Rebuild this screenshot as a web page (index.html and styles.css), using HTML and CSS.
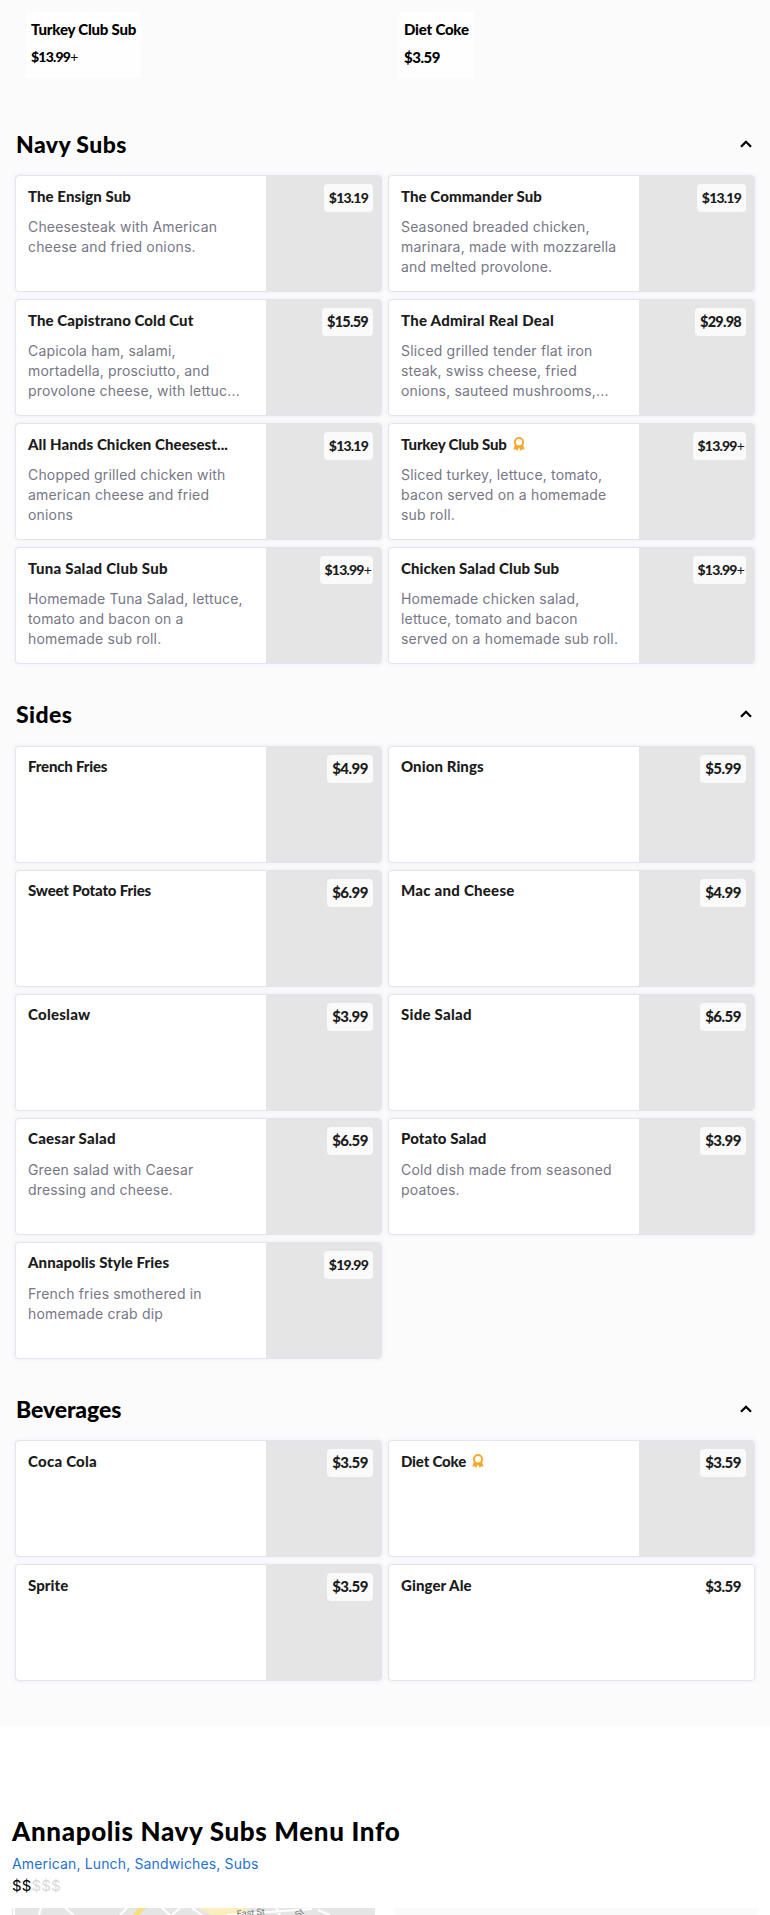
FILE: index.html
```html
<!DOCTYPE html>
<html lang="en">
<head>
  <meta charset="UTF-8" />
  <meta name="viewport" content="width=device-width, initial-scale=1.0" />
  <title>Annapolis Navy Subs Menu</title>
  <link rel="stylesheet" href="styles.css">
</head>
<body>
  <svg class="sprite" aria-hidden="true">
    <symbol id="chevron" viewBox="0 0 12 8"><path d="M1 6.8 L6 1.8 L11 6.8" fill="none" stroke="#000" stroke-width="2.3"/></symbol>
    <symbol id="award" viewBox="0 0 12 14"><path d="M2.2 7 L0.3 12.7 L2.7 12.3 L4.1 13.9 L6 10.4 L7.9 13.9 L9.3 12.3 L11.7 12.7 L9.8 7 Z" fill="#f8a92c"/><circle cx="6" cy="5.2" r="4.1" fill="#fff" stroke="#f8a92c" stroke-width="2"/></symbol>
  </svg>
  <main class="menu">
    <div class="popular">
      <div class="popular-col"><div class="popular-item"><span>Turkey Club Sub</span><span class="popular-price narrow">$13.99<i>+</i></span></div></div>
      <div class="popular-col"><div class="popular-item"><span>Diet Coke</span><span class="popular-price">$3.59</span></div></div>
    </div>

    <section>
      <header class="section-head"><h2 class="wide">Navy Subs</h2><svg class="chevron"><use href="#chevron"/></svg></header>
      <div class="grid">
        <article class="card">
          <div class="info"><h3>The Ensign Sub</h3><p>Cheesesteak with American<br>cheese and fried onions.</p></div>
          <div class="photo"><span class="price narrow">$13.19</span></div>
        </article>
        <article class="card">
          <div class="info"><h3>The Commander Sub</h3><p>Seasoned breaded chicken,<br>marinara, made with mozzarella<br>and melted provolone.</p></div>
          <div class="photo"><span class="price narrow">$13.19</span></div>
        </article>
        <article class="card">
          <div class="info"><h3>The Capistrano Cold Cut</h3><p>Capicola ham, salami,<br>mortadella, prosciutto, and<br>provolone cheese, with lettuc...</p></div>
          <div class="photo"><span class="price medium">$15.59</span></div>
        </article>
        <article class="card">
          <div class="info"><h3 class="wide">The Admiral Real Deal</h3><p>Sliced grilled tender flat iron<br>steak, swiss cheese, fried<br>onions, sauteed mushrooms,...</p></div>
          <div class="photo"><span class="price medium">$29.98</span></div>
        </article>
        <article class="card">
          <div class="info"><h3>All Hands Chicken Cheesest...</h3><p>Chopped grilled chicken with<br>american cheese and fried<br>onions</p></div>
          <div class="photo"><span class="price narrow">$13.19</span></div>
        </article>
        <article class="card">
          <div class="info"><h3 class="tight">Turkey Club Sub<svg class="award"><use href="#award"/></svg></h3><p>Sliced turkey, lettuce, tomato,<br>bacon served on a homemade<br>sub roll.</p></div>
          <div class="photo"><span class="price narrow plus">$13.99<i>+</i></span></div>
        </article>
        <article class="card">
          <div class="info"><h3 class="wide">Tuna Salad Club Sub</h3><p>Homemade Tuna Salad, lettuce,<br>tomato and bacon on a<br>homemade sub roll.</p></div>
          <div class="photo"><span class="price narrow plus">$13.99<i>+</i></span></div>
        </article>
        <article class="card">
          <div class="info"><h3>Chicken Salad Club Sub</h3><p>Homemade chicken salad,<br>lettuce, tomato and bacon<br>served on a homemade sub roll.</p></div>
          <div class="photo"><span class="price narrow plus">$13.99<i>+</i></span></div>
        </article>
      </div>
    </section>

    <section>
      <header class="section-head"><h2 class="wide">Sides</h2><svg class="chevron"><use href="#chevron"/></svg></header>
      <div class="grid">
        <article class="card"><div class="info"><h3 class="tight">French Fries</h3></div><div class="photo"><span class="price">$4.99</span></div></article>
        <article class="card"><div class="info"><h3>Onion Rings</h3></div><div class="photo"><span class="price">$5.99</span></div></article>
        <article class="card"><div class="info"><h3 class="tight">Sweet Potato Fries</h3></div><div class="photo"><span class="price">$6.99</span></div></article>
        <article class="card"><div class="info"><h3 class="wide">Mac and Cheese</h3></div><div class="photo"><span class="price">$4.99</span></div></article>
        <article class="card"><div class="info"><h3 class="wide">Coleslaw</h3></div><div class="photo"><span class="price">$3.99</span></div></article>
        <article class="card"><div class="info"><h3 class="wide">Side Salad</h3></div><div class="photo"><span class="price">$6.59</span></div></article>
        <article class="card">
          <div class="info"><h3 class="wide">Caesar Salad</h3><p>Green salad with Caesar<br>dressing and cheese.</p></div>
          <div class="photo"><span class="price">$6.59</span></div>
        </article>
        <article class="card">
          <div class="info"><h3>Potato Salad</h3><p>Cold dish made from seasoned<br>poatoes.</p></div>
          <div class="photo"><span class="price">$3.99</span></div>
        </article>
        <article class="card">
          <div class="info"><h3>Annapolis Style Fries</h3><p>French fries smothered in<br>homemade crab dip</p></div>
          <div class="photo"><span class="price narrow">$19.99</span></div>
        </article>
      </div>
    </section>

    <section>
      <header class="section-head"><h2>Beverages</h2><svg class="chevron"><use href="#chevron"/></svg></header>
      <div class="grid">
        <article class="card"><div class="info"><h3 class="wide">Coca Cola</h3></div><div class="photo"><span class="price">$3.59</span></div></article>
        <article class="card"><div class="info"><h3 class="tight">Diet Coke<svg class="award"><use href="#award"/></svg></h3></div><div class="photo"><span class="price">$3.59</span></div></article>
        <article class="card"><div class="info"><h3>Sprite</h3></div><div class="photo"><span class="price">$3.59</span></div></article>
        <article class="card"><div class="info"><h3>Ginger Ale</h3></div><div class="photo no-photo"><span class="price">$3.59</span></div></article>
      </div>
    </section>
  </main>

  <footer class="about">
    <h1>Annapolis Navy Subs Menu Info</h1>
    <a class="cuisines">American, Lunch, Sandwiches, Subs</a>
    <div class="cost">$$<span>$$$</span></div>
    <div class="panels">
      <svg class="map" viewBox="0 0 363 7">
        <rect width="363" height="7" fill="#e5e5e5"/>
        <path d="M187 0 H238 L226 7 H200 Z" fill="#fbeebd"/>
        <path d="M2 0 V7 M29 0 L27 7 M53 0 L62 7 M115 0 L108 7 M150 0 L158 7 M168 0 L160 7 M180 0 L190 7 M215 7 L300 1 M264 0 L268 7 M306 2 L318 7" fill="none" stroke="#fff" stroke-width="2"/>
        <path d="M133 -1 Q126 2 123 8" fill="none" stroke="#f7df7c" stroke-width="5"/>
        <text x="225" y="9" transform="rotate(-5 225 9)">East St</text>
        <text x="286" y="10" transform="rotate(-38 286 10)">St</text>
      </svg>
      <div class="hours"></div>
    </div>
  </footer>
</body>
</html>
```

FILE: styles.css
```css
* {
  box-sizing: border-box;
}
body {
  margin: 0;
  height: 1915px;
  overflow: hidden;
  background: #fff;
  color: #000;
  font-family: Lato, sans-serif;
}
h1, h2, h3, p {
  margin: 0;
  white-space: nowrap;
}
i {
  font-style: normal;
  font-weight: 400;
}
.sprite {
  display: none;
}
.menu {
  height: 1726px;
  padding: 12px 15px 0;
  background: #fbfbfb;
}
.popular {
  display: grid;
  grid-template-columns: 367px 367px;
  column-gap: 6px;
  height: 81.9px;
  padding-left: 11px;
}
.popular-item {
  display: inline-flex;
  flex-direction: column;
  height: 66px;
  padding: 3px 5px;
  background: #fefefe;
  font-size: 15px;
  font-weight: 900;
  line-height: 28px;
  letter-spacing: -0.2px;
}
.popular-price {
  letter-spacing: -0.5px;
}
.section-head {
  display: flex;
  justify-content: space-between;
  align-items: center;
  height: 81.5px;
  padding: 18.4px 3px 0 1px;
}
h2 {
  font-size: 23px;
  font-weight: 900;
  line-height: 30px;
  letter-spacing: -0.1px;
}
h2.wide {
  letter-spacing: 0.4px;
}
.chevron {
  width: 12px;
  height: 8px;
}
.grid {
  display: grid;
  grid-template-columns: 367px 367px;
  grid-auto-rows: 117px;
  gap: 7px 6px;
}
.card {
  display: flex;
  border: 1px solid #e4e4ee;
  border-radius: 4px;
  background: #fff;
  box-shadow: 0 0 4px rgba(110, 110, 220, 0.12);
  overflow: hidden;
}
.info {
  flex: 1;
  padding: 9.5px 0 0 12px;
}
h3 {
  display: flex;
  align-items: center;
  color: #1c1c1c;
  font-size: 15px;
  font-weight: 900;
  line-height: 21px;
  letter-spacing: 0.08px;
}
h3.wide {
  letter-spacing: 0.25px;
}
h3.tight {
  letter-spacing: -0.17px;
}
.award {
  width: 12px;
  height: 14px;
  margin-left: 6px;
}
p {
  margin-top: 10.5px;
  color: #777786;
  font-family: Inter, sans-serif;
  font-size: 14px;
  line-height: 20px;
  letter-spacing: 0.17px;
}
.photo {
  display: flex;
  justify-content: flex-end;
  align-items: flex-start;
  width: 115px;
  padding: 8px 8px 0 0;
  background: #e5e5e5;
}
.no-photo {
  background: #fff;
}
.price {
  height: 28px;
  padding: 0 5px;
  border-radius: 4px;
  background: #fafafa;
  color: #1c1c1c;
  font-size: 15px;
  font-weight: 900;
  line-height: 27px;
  letter-spacing: -0.5px;
}
.narrow {
  font-size: 14px;
  letter-spacing: -0.8px;
}
.medium {
  font-size: 14.5px;
  letter-spacing: -0.75px;
}
.no-photo .price {
  background: #fff;
}
.price.plus {
  padding-right: 2px;
}
.about {
  padding: 88px 12px 0;
}
h1 {
  font-size: 26px;
  font-weight: 900;
  line-height: 34px;
  letter-spacing: 0.65px;
}
.cuisines {
  display: block;
  color: #1f72d2;
  font-family: Inter, sans-serif;
  font-size: 14px;
  line-height: 22px;
  margin-top: 5px;
  letter-spacing: 0.15px;
}
.cost {
  margin-top: 1px;
  font-family: Inter, sans-serif;
  font-size: 15px;
  line-height: 20px;
  letter-spacing: 0.1px;
}
.cost span {
  color: #d9d9d9;
}
.panels {
  display: flex;
  gap: 20px;
  margin-top: 12px;
}
.map {
  width: 363px;
  height: 7px;
}
.map text {
  fill: #777;
  font-family: Roboto, sans-serif;
  font-size: 9px;
}
.hours {
  width: 362px;
  height: 7px;
  background: #fafafa;
}
```
